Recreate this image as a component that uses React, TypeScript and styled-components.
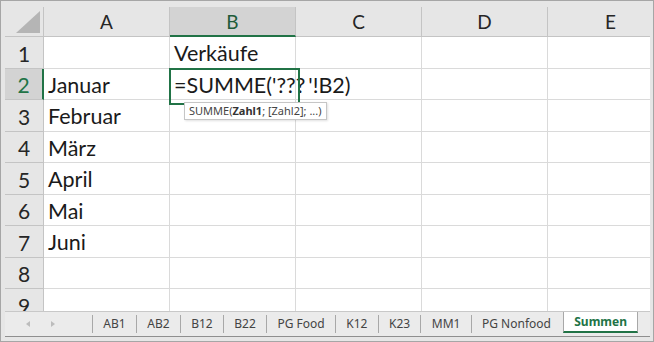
import styled, { createGlobalStyle } from 'styled-components';

const GlobalStyle = createGlobalStyle`
  html, body {
    margin: 0;
    padding: 0;
    background: #ffffff;
  }
  * {
    box-sizing: border-box;
  }
`;

const Frame = styled.div`
  width: 654px;
  height: 342px;
  border: 1px solid #a6a6a6;
  background: #e6e6e6;
  padding: 6px 3px 4px 4px;
  display: flex;
  flex-direction: column;
  overflow: hidden;
`;

const Sheet = styled.div`
  height: 304px;
  display: grid;
  grid-template-columns: 39px repeat(5, 126px);
  grid-template-rows: 30px;
  grid-auto-rows: 31.5px;
  background: #ffffff;
  overflow: hidden;
  font-family: Lato, 'Liberation Sans', sans-serif;
  color: #1a1a1a;
`;

const Corner = styled.div`
  position: relative;
  background: #e6e6e6;
  border-right: 1px solid #c4c4c4;
  border-bottom: 1px solid #c4c4c4;
  &::after {
    content: '';
    position: absolute;
    right: 3px;
    bottom: 3px;
    width: 24px;
    height: 22px;
    background: #b5b5b5;
    clip-path: polygon(100% 0, 100% 100%, 0 100%);
  }
`;

const ColHead = styled.div<{ $active?: boolean }>`
  display: flex;
  align-items: center;
  justify-content: center;
  font-size: 19px;
  background: ${p => (p.$active ? '#d3d3d3' : '#e6e6e6')};
  color: ${p => (p.$active ? '#1f5c3a' : '#262626')};
  border-right: 1px solid #c4c4c4;
  border-bottom: ${p => (p.$active ? '2px solid #217346' : '1px solid #c4c4c4')};
`;

const RowHead = styled.div<{ $active?: boolean }>`
  display: flex;
  align-items: center;
  justify-content: center;
  font-size: 21px;
  padding-top: 2px;
  background: ${p => (p.$active ? '#d3d3d3' : '#e6e6e6')};
  color: ${p => (p.$active ? '#217346' : '#262626')};
  border-right: ${p => (p.$active ? '2px solid #217346' : '1px solid #c4c4c4')};
  border-bottom: 1px solid #c4c4c4;
`;

const Cell = styled.div<{ $selected?: boolean }>`
  position: relative;
  display: flex;
  align-items: center;
  padding: 2px 0 0 4px;
  font-size: 21.5px;
  white-space: nowrap;
  border-right: 1px solid #dadada;
  border-bottom: 1px solid #dadada;
  z-index: ${p => (p.$selected ? 2 : 0)};
  ${p =>
    p.$selected &&
    `
    &::before {
      content: '';
      position: absolute;
      left: -1px;
      top: -1px;
      width: 127px;
      height: 33px;
      border: 2px solid #217346;
      pointer-events: none;
    }
  `}
`;

const Caret = styled.span`
  display: inline-block;
  width: 1px;
  height: 23px;
  margin: 0 1px 0 2px;
  background: #111;
  vertical-align: middle;
`;

const Hint = styled.div`
  position: absolute;
  left: 14px;
  top: 33px;
  padding: 1px 4px 2px;
  background: #ffffff;
  border: 1px solid #c6c6c6;
  box-shadow: 1px 1px 2px rgba(0, 0, 0, 0.12);
  font-family: 'Noto Sans', 'Liberation Sans', sans-serif;
  font-size: 11px;
  line-height: 13px;
  color: #444;
  white-space: nowrap;
  b {
    font-weight: 700;
    color: #333;
  }
`;

const TabBar = styled.div`
  height: 26px;
  display: flex;
  align-items: stretch;
  background: #ebebeb;
  border-top: 1px solid #c8c8c8;
  border-bottom: 1px solid #8f8f8f;
  font-family: 'Noto Sans', 'Liberation Sans', sans-serif;
  font-size: 12px;
  color: #444;
`;

const Nav = styled.div`
  width: 88px;
  display: flex;
  align-items: center;
  gap: 21px;
  padding-left: 21px;
  border-right: 1px solid #a8a8a8;
  margin: 3px 0 3px;
`;

const Arrow = styled.span<{ $dir: 'left' | 'right' }>`
  width: 0;
  height: 0;
  border-top: 3px solid transparent;
  border-bottom: 3px solid transparent;
  ${p =>
    p.$dir === 'left'
      ? 'border-right: 4px solid #bcbcbc;'
      : 'border-left: 4px solid #bcbcbc;'}
`;

const Tab = styled.div<{ $active?: boolean }>`
  display: flex;
  align-items: center;
  padding: 0 10.3px 1px;
  white-space: nowrap;
  ${p =>
    p.$active
      ? `
    background: #ffffff;
    color: #217346;
    font-weight: 700;
    border-left: 1px solid #c0c0c0;
    border-right: 1px solid #a8a8a8;
    border-bottom: 2px solid #217346;
    margin: 0 0 3px 2px;
    padding: 0 10px 0;
  `
      : `
    margin: 3px 0;
    & + & {
      border-left: 1px solid #a8a8a8;
    }
  `}
`;

const cols = ['A', 'B', 'C', 'D', 'E'];
const months = ['', 'Januar', 'Februar', 'März', 'April', 'Mai', 'Juni', '', ''];
const tabs = ['AB1', 'AB2', 'B12', 'B22', 'PG Food', 'K12', 'K23', 'MM1', 'PG Nonfood'];

export default function App() {
  return (
    <>
      <GlobalStyle />
      <Frame>
        <Sheet>
          <Corner />
          {cols.map(c => (
            <ColHead key={c} $active={c === 'B'}>
              {c}
            </ColHead>
          ))}
          {months.map((m, i) => {
            const row = i + 1;
            return [
              <RowHead key={`h${row}`} $active={row === 2}>
                {row}
              </RowHead>,
              <Cell key={`a${row}`}>{m}</Cell>,
              row === 2 ? (
                <Cell key={`b${row}`} $selected>
                  =SUMME('???<Caret />'!B2)
                  <Hint>
                    SUMME(<b>Zahl1</b>; [Zahl2]; ...)
                  </Hint>
                </Cell>
              ) : (
                <Cell key={`b${row}`}>{row === 1 ? 'Verkäufe' : ''}</Cell>
              ),
              <Cell key={`c${row}`} />,
              <Cell key={`d${row}`} />,
              <Cell key={`e${row}`} />,
            ];
          })}
        </Sheet>
        <TabBar>
          <Nav>
            <Arrow $dir="left" />
            <Arrow $dir="right" />
          </Nav>
          {tabs.map(t => (
            <Tab key={t}>{t}</Tab>
          ))}
          <Tab $active>Summen</Tab>
        </TabBar>
      </Frame>
    </>
  );
}
